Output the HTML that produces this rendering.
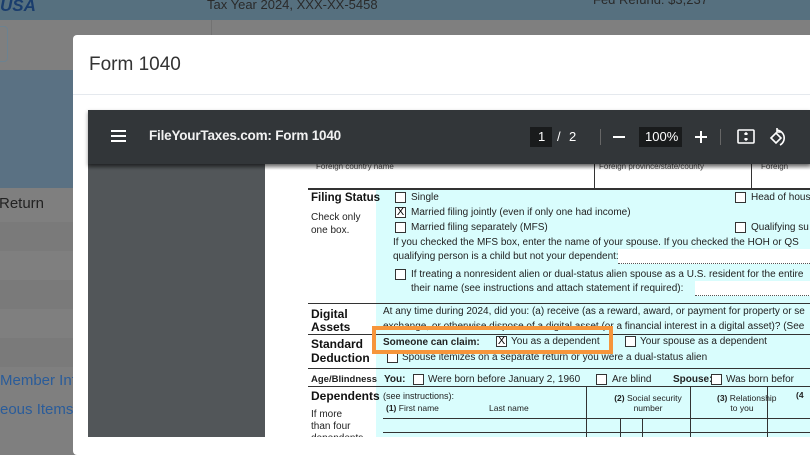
<!DOCTYPE html>
<html><head><meta charset="utf-8"><style>
*{margin:0;padding:0;box-sizing:border-box}
body{width:810px;height:437px;overflow:hidden;position:relative;background:#7f7f7f;font-family:"Liberation Sans",Arial,sans-serif}
.a{position:absolute;white-space:nowrap}
.f{font-size:10px;color:#222}
.b{font-weight:bold}
.cb{position:absolute;width:11px;height:11px;border:1px solid #333;background:#fff}
.hl{position:absolute;height:1px;background:#333}
.vl{position:absolute;width:1px;background:#333}
</style></head><body>
<div class="a" style="left:0;top:0;width:810px;height:20px;background:#56707f"></div>
<div class="a" style="left:0;top:-4px;font:italic bold 17px 'Liberation Sans';color:#1a3d6d">USA</div>
<div class="a" style="left:207px;top:-3px;font-size:13px;color:#2a2a2a">Tax Year 2024, XXX-XX-5458</div>
<div class="a" style="left:593px;top:-8px;font-size:13px;color:#2a2a2a">Fed Refund: $3,237</div>
<div class="a" style="left:-6px;top:26px;width:14px;height:36px;border:1px solid #6c8290;border-radius:4px"></div>
<div class="a" style="left:211px;top:20px;width:1px;height:20px;background:#727272"></div>
<div class="a" style="left:0;top:70px;width:73px;height:118px;background:#5a7183"></div>
<div class="a" style="left:-1px;top:195px;font-size:15px;color:#222">Return</div>
<div class="a" style="left:0;top:222px;width:73px;height:29px;background:#7a7a7a"></div>
<div class="a" style="left:0;top:280px;width:73px;height:29px;background:#7a7a7a"></div>
<div class="a" style="left:0;top:338px;width:73px;height:29px;background:#7a7a7a"></div>
<div class="a" style="left:0;top:372px;font-size:15px;color:#2a5c9a">Member Inf</div>
<div class="a" style="left:0;top:401px;font-size:15px;color:#2a5c9a">eous Items</div>
<div class="a" style="left:73px;top:35px;width:760px;height:420px;background:#fff;border-radius:4px"></div>
<div class="a" style="left:89px;top:54px;font-size:19px;color:#333">Form 1040</div>
<div class="a" style="left:73px;top:94px;width:740px;height:1px;background:#e5e9ee"></div>
<div class="a" style="left:88px;top:110px;width:722px;height:327px;background:#525659"></div>
<div class="a" style="left:88px;top:110px;width:722px;height:54px;background:#323639;box-shadow:0 2px 4px rgba(0,0,0,.4);z-index:5">
 <div class="a" style="left:23px;top:20px;width:15px;height:2px;background:#fff;box-shadow:0 5px 0 #fff,0 10px 0 #fff"></div>
 <div class="a" style="left:61px;top:18px;font-size:13.5px;color:#f1f1f1;font-weight:bold;letter-spacing:-0.2px">FileYourTaxes.com: Form 1040</div>
 <div class="a" style="left:442px;top:17px;width:22px;height:20px;background:#191b1c"></div>
 <div class="a" style="left:450px;top:19px;font-size:13px;color:#fff">1</div>
 <div class="a" style="left:469px;top:19px;font-size:13px;color:#fff">/</div>
 <div class="a" style="left:481px;top:19px;font-size:13px;color:#fff">2</div>
 <div class="a" style="left:512px;top:19px;width:1px;height:16px;background:#666"></div>
 <div class="a" style="left:525px;top:26px;width:12px;height:2px;background:#fff"></div>
 <div class="a" style="left:551px;top:17px;width:43px;height:20px;background:#191b1c"></div>
 <div class="a" style="left:557px;top:19px;font-size:13px;color:#fff">100%</div>
 <div class="a" style="left:607px;top:26px;width:12px;height:2px;background:#fff"></div>
 <div class="a" style="left:612px;top:21px;width:2px;height:12px;background:#fff"></div>
 <div class="a" style="left:632px;top:19px;width:1px;height:16px;background:#666"></div>
 <svg class="a" style="left:648px;top:17px" width="20" height="20" viewBox="0 0 20 20" fill="none" stroke="#fff" stroke-width="1.6"><rect x="2" y="3" width="16" height="13" rx="1"/><path d="M10 6v2M10 11v2" /><path d="M8.5 7.5L10 6l1.5 1.5M8.5 11.5L10 13l1.5-1.5"/></svg>
 <svg class="a" style="left:680px;top:16px" width="20" height="22" viewBox="0 0 20 22" fill="none" stroke="#fff" stroke-width="1.6"><path d="M3 12l5-5 5 5-5 5z"/><path d="M9 4a8 8 0 0 1 3 15"/><path d="M9 2v4h4"/></svg>
</div>
<div class="a" style="left:265px;top:164px;width:545px;height:273px;background:#fff;overflow:hidden">
 <div class="a" style="left:111px;top:25px;width:440px;height:250px;background:#d9fdfd"></div>
 <div class="a" style="left:51px;top:-2px;font-size:8px;color:#444">Foreign country name</div>
 <div class="a" style="left:334px;top:-2px;font-size:8px;color:#444">Foreign province/state/county</div>
 <div class="a" style="left:496px;top:-2px;font-size:8px;color:#444">Foreign</div>
 <div class="vl" style="left:329px;top:0;height:25px"></div>
 <div class="vl" style="left:486px;top:0;height:25px"></div>
 <div class="hl" style="left:43px;top:24px;width:510px;height:1.5px"></div>
 <div class="a b" style="left:46px;top:28px;font-size:11.5px;color:#111">Filing Status</div>
 <div class="a f" style="left:46px;top:48px">Check only</div>
 <div class="a f" style="left:46px;top:61px">one box.</div>
 <div class="cb" style="left:130px;top:28px"></div><div class="a f" style="left:146px;top:28px">Single</div>
 <div class="cb" style="left:470px;top:28px"></div><div class="a f" style="left:486px;top:28px">Head of hous</div>
 <div class="cb" style="left:130px;top:43px;font-size:11px;line-height:9px;text-align:center">X</div><div class="a f" style="left:146px;top:43px">Married filing jointly (even if only one had income)</div>
 <div class="cb" style="left:130px;top:58px"></div><div class="a f" style="left:146px;top:58px">Married filing separately (MFS)</div>
 <div class="cb" style="left:470px;top:58px"></div><div class="a f" style="left:486px;top:58px">Qualifying su</div>
 <div class="a f" style="left:128px;top:73px">If you checked the MFS box, enter the name of your spouse. If you checked the HOH or QS</div>
 <div class="a f" style="left:128px;top:87px">qualifying person is a child but not your dependent:</div>
 <div class="a" style="left:353px;top:85px;width:200px;height:15px;background:#fff;border-bottom:1px dotted #555"></div>
 <div class="cb" style="left:130px;top:105px"></div><div class="a f" style="left:146px;top:105px">If treating a nonresident alien or dual-status alien spouse as a U.S. resident for the entire</div>
 <div class="a f" style="left:146px;top:119px">their name (see instructions and attach statement if required):</div>
 <div class="a" style="left:430px;top:117px;width:120px;height:15px;background:#fff;border-bottom:1px dotted #555"></div>
 <div class="hl" style="left:43px;top:139px;width:510px"></div>
 <div class="a b" style="left:46px;top:143px;font-size:12px;color:#111">Digital</div>
 <div class="a b" style="left:46px;top:156px;font-size:12px;color:#111">Assets</div>
 <div class="a f" style="left:118px;top:142px">At any time during 2024, did you: (a) receive (as a reward, award, or payment for property or se</div>
 <div class="a f" style="left:118px;top:157px">exchange, or otherwise dispose of a digital asset (or a financial interest in a digital asset)? (See</div>
 <div class="hl" style="left:43px;top:170px;width:510px"></div>
 <div class="a b" style="left:46px;top:173px;font-size:12px;color:#111">Standard</div>
 <div class="a b" style="left:46px;top:187px;font-size:12px;color:#111">Deduction</div>
 <div class="a f b" style="left:118px;top:173px">Someone can claim:</div>
 <div class="cb" style="left:231px;top:172px;font-size:11px;line-height:9px;text-align:center">X</div><div class="a f" style="left:246px;top:172px">You as a dependent</div>
 <div class="cb" style="left:360px;top:172px"></div><div class="a f" style="left:375px;top:172px">Your spouse as a dependent</div>
 <div class="cb" style="left:122px;top:188px"></div><div class="a f" style="left:137px;top:188px">Spouse itemizes on a separate return or you were a dual-status alien</div>
 <div class="hl" style="left:43px;top:204px;width:510px"></div>
 <div class="a f b" style="left:46px;top:210px;font-size:9.5px">Age/Blindness</div>
 <div class="a f b" style="left:119px;top:210px">You:</div>
 <div class="cb" style="left:148px;top:210px"></div><div class="a f" style="left:163px;top:210px">Were born before January 2, 1960</div>
 <div class="cb" style="left:331px;top:210px"></div><div class="a f" style="left:347px;top:210px">Are blind</div>
 <div class="a f b" style="left:408px;top:210px">Spouse:</div>
 <div class="cb" style="left:446px;top:210px"></div><div class="a f" style="left:461px;top:210px">Was born befor</div>
 <div class="hl" style="left:43px;top:222px;width:510px"></div>
 <div class="a b" style="left:46px;top:225px;font-size:12px;color:#111">Dependents</div>
 <div class="a f" style="left:118px;top:227px;font-size:9px">(see instructions):</div>
 <div class="a f" style="left:121px;top:239px;font-size:8.5px"><b>(1)</b> First name</div>
 <div class="a f" style="left:224px;top:239px;font-size:8.5px">Last name</div>
 <div class="a f" style="left:345px;top:229px;font-size:8.5px;text-align:center;width:76px"><b>(2)</b> Social security<br>number</div>
 <div class="a f" style="left:452px;top:229px;font-size:8.5px;text-align:center;width:50px"><b>(3)</b> Relationship<br>to you</div>
 <div class="a f b" style="left:531px;top:226px;font-size:8.5px">(4</div>
 <div class="vl" style="left:321px;top:222px;height:60px"></div>
 <div class="vl" style="left:425px;top:222px;height:60px"></div>
 <div class="vl" style="left:502px;top:222px;height:60px"></div>
 <div class="hl" style="left:118px;top:254px;width:440px"></div>
 <div class="vl" style="left:355px;top:254px;height:30px"></div>
 <div class="vl" style="left:377px;top:254px;height:30px"></div>
 <div class="hl" style="left:118px;top:268px;width:440px"></div>
 <div class="a f" style="left:46px;top:245px">If more</div>
 <div class="a f" style="left:46px;top:257px">than four</div>
 <div class="a f" style="left:46px;top:269px">dependents</div>
</div>
<div class="a" style="left:88px;top:164px;width:722px;height:6px;background:linear-gradient(rgba(0,0,0,.35),rgba(0,0,0,0))"></div>
<div class="a" style="left:372px;top:326px;width:241px;height:28px;border:4px solid #f6953b"></div>
</body></html>
